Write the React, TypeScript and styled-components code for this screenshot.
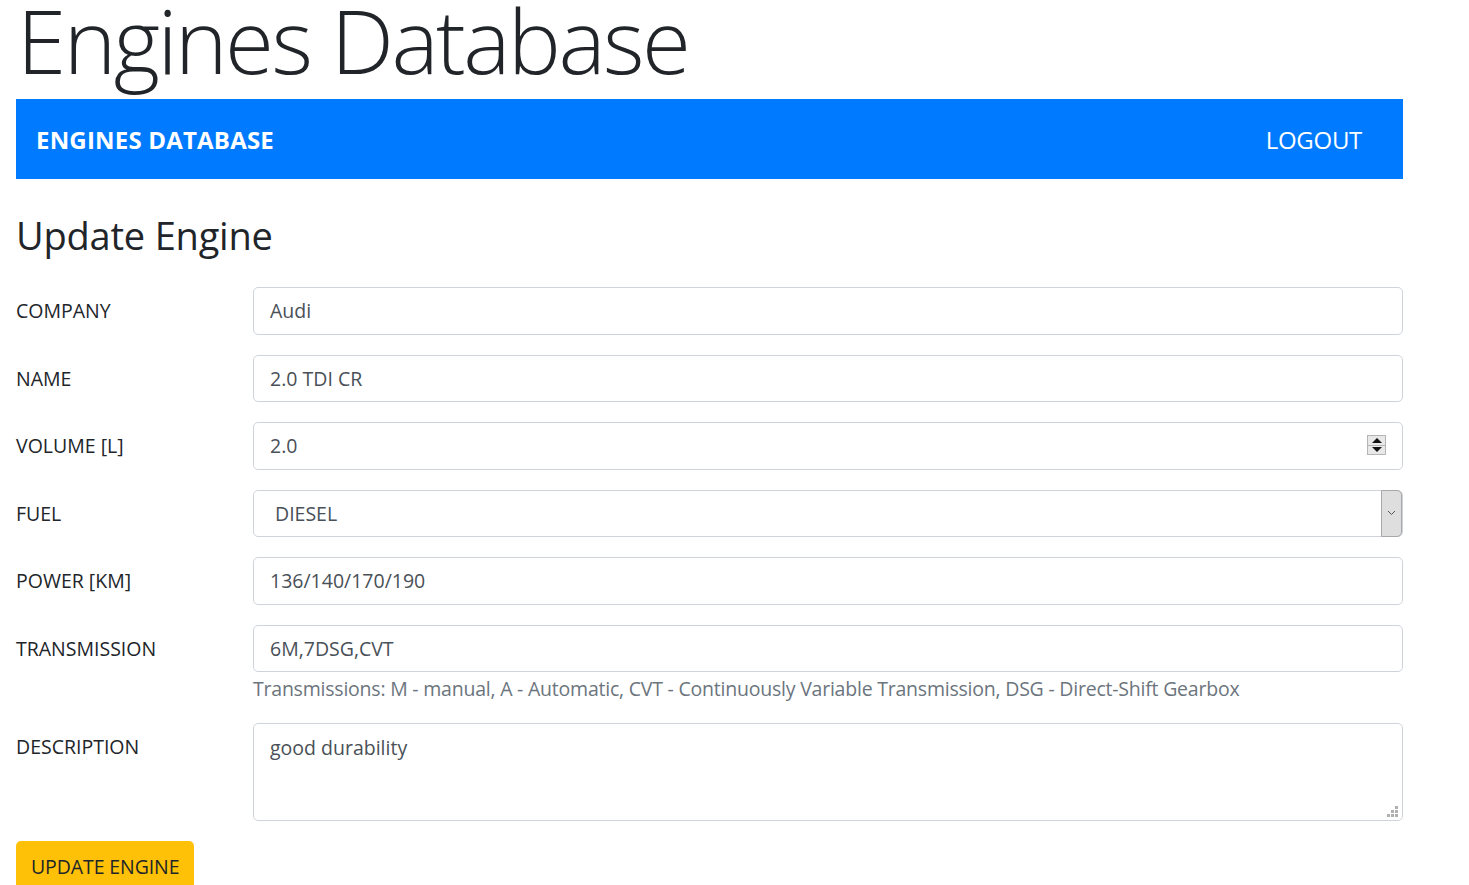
import React from 'react';
import styled, { createGlobalStyle } from 'styled-components';

const GlobalStyle = createGlobalStyle`
  html, body {
    margin: 0;
    padding: 0;
    background: #fff;
  }
  body {
    font-family: 'Open Sans', 'Noto Sans', sans-serif;
    font-size: 20px;
    color: #212529;
    overflow: hidden;
  }
  * {
    box-sizing: border-box;
  }
`;

const Page = styled.div`
  width: 1403px;
  padding-left: 16px;
`;

const Title = styled.h1`
  margin: 0 0 0 1px;
  height: 99px;
  font-size: 89px;
  font-weight: 300;
  line-height: 80px;
  letter-spacing: -2.5px;
  color: #212529;
  white-space: nowrap;
`;

const Navbar = styled.nav`
  display: flex;
  align-items: center;
  justify-content: space-between;
  height: 80px;
  padding: 0 41px 0 20px;
  background: #007bff;
`;

const Brand = styled.a`
  color: #fff;
  font-size: 24px;
  font-weight: 700;
  text-decoration: none;
  letter-spacing: 0.2px;
`;

const NavLink = styled.a`
  color: #fff;
  font-size: 24px;
  text-decoration: none;
  letter-spacing: -0.3px;
`;

const PageHeading = styled.h3`
  margin: 33px 0 29px;
  font-size: 38px;
  font-weight: 400;
  line-height: 46px;
  letter-spacing: -0.2px;
`;

const Form = styled.form`
  display: flex;
  flex-direction: column;
  gap: 20px;
`;

const Row = styled.div`
  display: grid;
  grid-template-columns: 237px 1150px;
  align-items: start;
`;

const Label = styled.label`
  line-height: 47.5px;
  font-size: 19.5px;
  text-transform: uppercase;
`;

const Field = styled.div`
  position: relative;
  display: flex;
  flex-direction: column;
`;

const Input = styled.input<{ $padLeft?: number }>`
  display: block;
  width: 100%;
  height: 47.5px;
  padding: 0 16px 0 ${(p) => p.$padLeft ?? 16}px;
  border: 1px solid #ced4da;
  border-radius: 5px;
  font-family: inherit;
  font-size: 19.5px;
  color: #495057;
  background: #fff;
  outline: none;
`;

const TextArea = styled.textarea`
  display: block;
  width: 100%;
  height: 98px;
  padding: 9px 16px;
  border: 1px solid #ced4da;
  border-radius: 5px;
  font-family: inherit;
  font-size: 19.5px;
  line-height: 30px;
  color: #495057;
  resize: none;
  outline: none;
`;

const HelpText = styled.small`
  display: block;
  margin-top: 3px;
  font-size: 19.5px;
  line-height: 28px;
  color: #6c757d;
  letter-spacing: -0.22px;
  white-space: nowrap;
`;

const Spinner = styled.div`
  position: absolute;
  right: 17px;
  top: 13px;
  width: 19px;
  height: 20px;
  display: flex;
  flex-direction: column;
  border: 1px solid #b5b5b5;
  background: #e8e8e8;
`;

const SpinHalf = styled.div<{ $down?: boolean }>`
  flex: 1;
  display: flex;
  align-items: center;
  justify-content: center;
  border-top: ${(p) => (p.$down ? '1px solid #b5b5b5' : 'none')};
  &::after {
    content: '';
    border-left: 5px solid transparent;
    border-right: 5px solid transparent;
    ${(p) => (p.$down ? 'border-top: 5px solid #111;' : 'border-bottom: 5px solid #111;')}
  }
`;

const SelectArrow = styled.div`
  position: absolute;
  right: 1px;
  top: 0;
  width: 21px;
  height: 47.5px;
  display: flex;
  align-items: center;
  justify-content: center;
  background: #dedede;
  border: 1px solid #a8a8a8;
  border-radius: 0 5px 5px 0;
  pointer-events: none;
`;

const Grip = styled.div`
  position: absolute;
  right: 5px;
  bottom: 4px;
  width: 11px;
  height: 11px;
  line-height: 0;
  pointer-events: none;
`;

const SubmitButton = styled.button`
  height: 50px;
  padding: 0 15px;
  border: none;
  border-radius: 5px;
  background: #ffc107;
  color: #212529;
  font-family: inherit;
  font-size: 19.5px;
  white-space: nowrap;
  letter-spacing: -0.1px;
`;

export default function App() {
  return (
    <>
      <GlobalStyle />
      <Page>
        <Title>Engines Database</Title>
        <Navbar>
          <Brand href="#">ENGINES DATABASE</Brand>
          <NavLink href="#">LOGOUT</NavLink>
        </Navbar>
        <PageHeading>Update Engine</PageHeading>
        <Form onSubmit={(e) => e.preventDefault()}>
          <Row>
            <Label>Company</Label>
            <Field>
              <Input defaultValue="Audi" />
            </Field>
          </Row>
          <Row>
            <Label>Name</Label>
            <Field>
              <Input defaultValue="2.0 TDI CR" />
            </Field>
          </Row>
          <Row>
            <Label>Volume [L]</Label>
            <Field>
              <Input defaultValue="2.0" />
              <Spinner>
                <SpinHalf />
                <SpinHalf $down />
              </Spinner>
            </Field>
          </Row>
          <Row>
            <Label>Fuel</Label>
            <Field>
              <Input defaultValue="DIESEL" $padLeft={21} readOnly />
              <SelectArrow>
                <svg width="9" height="6" viewBox="0 0 9 6">
                  <path d="M1 1 L4.5 4.5 L8 1" fill="none" stroke="#555" strokeWidth="1" />
                </svg>
              </SelectArrow>
            </Field>
          </Row>
          <Row>
            <Label>Power [KM]</Label>
            <Field>
              <Input defaultValue="136/140/170/190" />
            </Field>
          </Row>
          <Row>
            <Label>Transmission</Label>
            <Field>
              <Input defaultValue="6M,7DSG,CVT" />
              <HelpText>
                Transmissions: M - manual, A - Automatic, CVT - Continuously Variable Transmission, DSG - Direct-Shift Gearbox
              </HelpText>
            </Field>
          </Row>
          <Row>
            <Label>Description</Label>
            <Field>
              <TextArea defaultValue="good durability" />
              <Grip>
                <svg width="11" height="11" viewBox="0 0 11 11" fill="#b0b0b0">
                  <rect x="8" y="0" width="3" height="3" />
                  <rect x="4" y="4" width="3" height="3" />
                  <rect x="8" y="4" width="3" height="3" />
                  <rect x="0" y="8" width="3" height="3" />
                  <rect x="4" y="8" width="3" height="3" />
                  <rect x="8" y="8" width="3" height="3" />
                </svg>
              </Grip>
            </Field>
          </Row>
          <div>
            <SubmitButton type="submit">UPDATE ENGINE</SubmitButton>
          </div>
        </Form>
      </Page>
    </>
  );
}
